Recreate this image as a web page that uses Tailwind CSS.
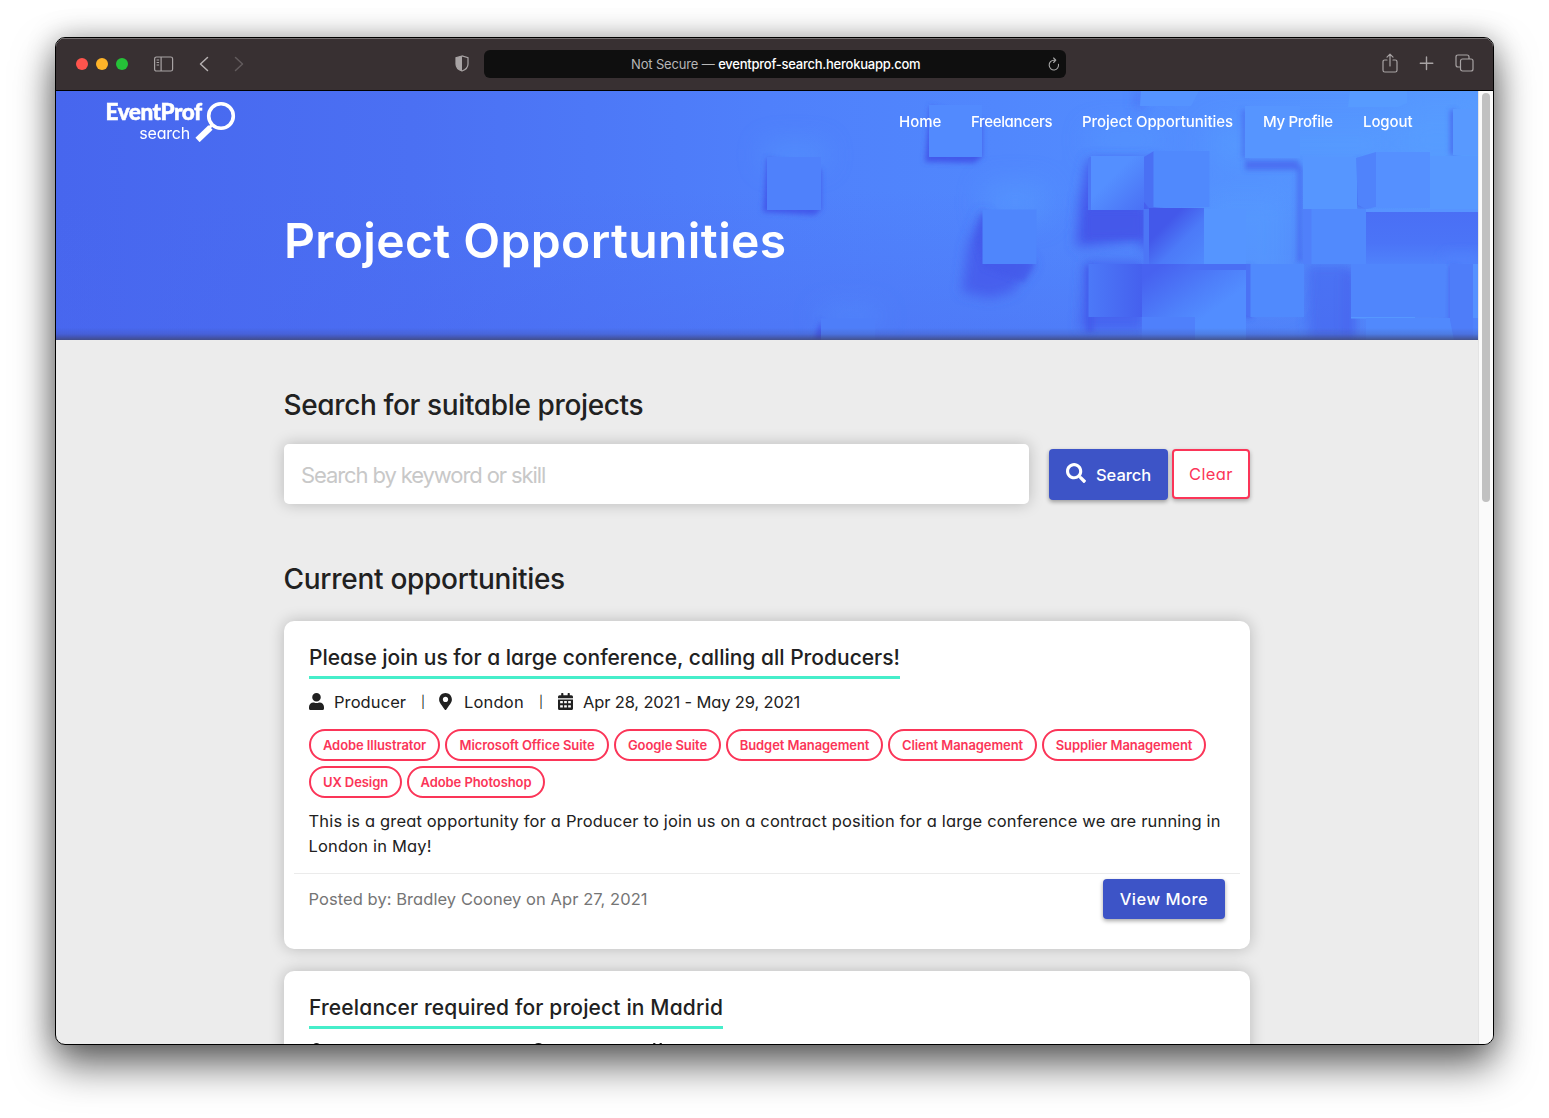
<!DOCTYPE html>
<html lang="en">
<head>
<meta charset="utf-8">
<title>EventProf Search - Project Opportunities</title>
<script src="https://cdn.jsdelivr.net/npm/@tailwindcss/browser@4"></script>
</head>
<body class="h-[1118px] overflow-hidden bg-white font-['Inter',sans-serif] text-[#212121] antialiased pt-[37px] pl-[55px]">
<div class="flex h-[1008px] w-[1439px] flex-col overflow-hidden rounded-[10px] border border-black bg-[#ececec] shadow-[0_20px_40px_rgba(0,0,0,0.6),0_0_28px_rgba(0,0,0,0.25)]">
  <!-- browser toolbar -->
  <div class="flex h-[53px] shrink-0 items-center border-t border-b border-t-[#767172] border-b-black bg-[#383032] pr-[19px] pb-[2px] pl-5 text-[#a8a3a4]">
    <div class="flex gap-2">
      <span class="size-3 rounded-full bg-[#ff544d]"></span>
      <span class="size-3 rounded-full bg-[#ffb429]"></span>
      <span class="size-3 rounded-full bg-[#25c138]"></span>
    </div>
    <svg class="ml-[26px] h-4 w-5" viewBox="0 0 20 16" fill="none" stroke="currentColor" stroke-width="1.200"><rect x="0.600" y="1" width="18" height="14" rx="1.800"/><path d="M7.100 1v14M2.600 4h2.500M2.600 6.500h2.500M2.600 9h2.500"/></svg>
    <svg class="ml-[25px] h-4 w-10 text-[#b5b0b1]" viewBox="0 0 40 16" fill="none" stroke-width="1.500" stroke-linecap="round" stroke-linejoin="round"><path stroke="currentColor" d="M8.500 1.500 1.500 8l7 6.500"/></svg>
    <svg class="-ml-[6px] h-4 w-3" viewBox="0 0 12 16" fill="none" stroke="#625b5d" stroke-width="1.500" stroke-linecap="round" stroke-linejoin="round"><path d="M2.500 1.500 9.500 8l-7 6.500"/></svg>
    <svg class="ml-[210px] h-[17px] w-[14px]" viewBox="0 0 14 17"><path d="M7 1 1 2.800v6.200c0 3.500 2.500 5.800 6 7 3.500-1.200 6-3.500 6-7V2.800z" fill="none" stroke="currentColor" stroke-width="1.200"/><path d="M7 1 1 2.800v6.200c0 3.500 2.500 5.800 6 7z" fill="currentColor"/></svg>
    <div class="ml-[15px] flex h-7 w-[582px] items-center rounded-md bg-[#0f0f0f] pr-[6px] pl-[147px] text-[13px]">
      <span class="pt-[2px] tracking-[-0.150px] whitespace-pre text-[#b7b7b7]">Not Secure — </span><span class="pt-[2px] tracking-[-0.240px] font-medium whitespace-nowrap text-white">eventprof-search.herokuapp.com</span>
      <svg class="ml-auto h-[14px] w-3" viewBox="0 0 12 14" fill="none" stroke="#a5a5a5" stroke-width="1.100" stroke-linecap="round" stroke-linejoin="round"><path d="M10.500 7.200A4.700 4.900 0 1 1 6 3.200h1.500M5.600 1l2.200 2.200-2.200 2.300"/></svg>
    </div>
    <svg class="-mt-[2px] ml-auto h-5 w-4" viewBox="0 0 16 20" fill="none" stroke="currentColor" stroke-width="1.200" stroke-linecap="round" stroke-linejoin="round"><path d="M5 7H2.800Q1 7 1 8.800v8.400Q1 19 2.800 19h10.400q1.800 0 1.800-1.800V8.800Q15 7 13.200 7H11M8 13V1.500M5 4.200 8 1.200l3 3"/></svg>
    <svg class="ml-[21px] size-[15px]" viewBox="0 0 15 15" fill="none" stroke="currentColor" stroke-width="1.400" stroke-linecap="round"><path d="M7.500 1v12.500M1.300 7.300h12.500"/></svg>
    <svg class="-mt-[1px] ml-[21px] h-[18px] w-[19px]" viewBox="0 0 19 18" fill="none" stroke="currentColor" stroke-width="1.200"><rect x="5.500" y="5" width="12.500" height="12" rx="2"/><path d="M5.500 13H3q-2 0-2-2V3q0-2 2-2h9q2 0 2 2v2"/></svg>
  </div>

  <div class="flex min-h-0 flex-1">
    <div class="flex w-[1422px] shrink-0 flex-col">
      <!-- hero -->
      <header class="relative h-[249px] shrink-0 overflow-hidden text-white">
        <svg class="absolute inset-0 h-full w-full" viewBox="56 91 1422 249" preserveAspectRatio="none">
          <defs>
            <linearGradient id="bg"><stop offset="0" stop-color="#4766ee"/><stop offset=".25" stop-color="#4b70f3"/><stop offset=".5" stop-color="#4f80fb"/><stop offset=".75" stop-color="#528bfe"/><stop offset="1" stop-color="#579aff"/></linearGradient>
            <linearGradient id="low" x2="0" y2="1"><stop offset=".4" stop-color="#4a68f0" stop-opacity="0"/><stop offset="1" stop-color="#4a68f0" stop-opacity=".4"/></linearGradient>
            <linearGradient id="edge" x2="0" y2="1"><stop offset="0" stop-color="#3c3c60" stop-opacity="0"/><stop offset=".5" stop-color="#3c3c70" stop-opacity=".18"/><stop offset="1" stop-color="#404468" stop-opacity=".75"/></linearGradient>
            <linearGradient id="f1" x1="0" y1="0" x2="1" y2="1"><stop offset=".4" stop-color="#548fff"/><stop offset="1" stop-color="#4a70f5"/></linearGradient>
            <linearGradient id="f2" x1="0" y1="0" x2="1" y2="0"><stop offset="0" stop-color="#4c79f8"/><stop offset="1" stop-color="#4560ee"/></linearGradient>
            <linearGradient id="f3" x1="0" y1="0" x2="1" y2="1"><stop offset=".3" stop-color="#4358ea"/><stop offset=".6" stop-color="#4c7af8"/><stop offset="1" stop-color="#5089fd"/></linearGradient>
            <linearGradient id="f4" x1="0" y1="0" x2="1" y2="1"><stop offset=".1" stop-color="#4762f0"/><stop offset=".45" stop-color="#4e7ffa"/><stop offset=".65" stop-color="#528dff"/></linearGradient>
            <linearGradient id="f5" x2="0" y2="1"><stop offset="0" stop-color="#4a6ff5"/><stop offset=".6" stop-color="#4b74f7"/><stop offset="1" stop-color="#4f82fb"/></linearGradient>
            <filter id="b3" x="-50%" y="-50%" width="200%" height="200%"><feGaussianBlur stdDeviation="2.500"/></filter>
            <filter id="b7" x="-50%" y="-50%" width="200%" height="200%"><feGaussianBlur stdDeviation="6"/></filter>
            <filter id="b14" x="-50%" y="-50%" width="200%" height="200%"><feGaussianBlur stdDeviation="14"/></filter>
          </defs>
          <rect x="56" y="91" width="1422" height="249" fill="url(#bg)"/>
          <rect x="56" y="91" width="1422" height="249" fill="url(#low)"/>
          <!-- light glows -->
          <g fill="#59a0ff" filter="url(#b14)" opacity=".5"><rect x="985" y="185" width="60" height="35"/><rect x="765" y="145" width="60" height="20"/><rect x="1210" y="125" width="180" height="40"/><rect x="1400" y="110" width="78" height="60"/><rect x="1200" y="190" width="90" height="110"/><rect x="820" y="310" width="60" height="12"/><rect x="1090" y="130" width="70" height="20"/></g>
          <!-- soft shadows -->
          <g fill="#4459eb" filter="url(#b7)">
            <path d="M982 212 968 245 962 292 990 298 1012 292 1034 264z" opacity=".85"/>
            <path d="M1088 160 1080 200 1076 246H1085L1142 240V160z"/>
            <path d="M1140 160h16v90h-16z" opacity=".8"/>
            <path d="M1084 262h60v68h-64z" opacity=".7"/>
            <path d="M1305 264h46v76h-42z" opacity=".5"/>
            <path d="M1346 270h8v70h-8z" opacity=".8"/>
            <path d="M1135 90h8v18h-8z" opacity=".5"/>
          </g>
          <path d="M1366 212h112v52h-112z" fill="url(#f5)"/>
          <path d="M1445 255h33v85h-33z" fill="#4f80fb" filter="url(#b7)"/>
          <g fill="#4358ea" filter="url(#b3)">
            <path d="M767 158 763 212 815 215 821 209V170z"/>
            <path d="M930 106 925 162 974 163 982 157V120z"/>
            <path d="M982 212 975 240 984 268 1024 282 1034 264z" opacity=".7"/>
            <path d="M821 320 814 340h12z"/>
            <path d="M1087 212h56v26h-56z" opacity=".8"/>
            <path d="M1245 160h54v10h-54z" opacity=".6"/>
            <path d="M1297 166h6v96h-6zM1242 110h5v48h-5z" opacity=".5"/>
            <path d="M1086 266h8v66h-8zM1244 266h8v52h-8zM1450 110h6v45h-6zM1356 160h12v48h-12zM1450 266h8v74h-8z" opacity=".65"/>
          </g>
          <!-- cubes -->
          <rect x="767" y="157" width="54" height="53" fill="#4f81fb"/>
          <rect x="929" y="105" width="53" height="52" fill="#528afe"/>
          <rect x="982.500" y="209.500" width="54" height="54.500" fill="#4f86fc"/>
          <rect x="821" y="318.500" width="54" height="22" fill="#4e7ef9"/>
          <rect x="1090" y="156" width="54" height="54" fill="url(#f1)"/>
          <path d="M1088 159l3-3v54l-3 0z" fill="#4c77f6"/>
          <rect x="1143.500" y="209" width="6" height="55" fill="#4c76f6"/>
          <rect x="1149" y="208" width="55" height="56" fill="url(#f3)"/>
          <rect x="1204" y="209" width="42" height="55" fill="#5595ff"/>
          <path d="M1144 157 1154 151V207L1149 208 1144 202z" fill="#4a70f4"/>
          <rect x="1153.500" y="151" width="56" height="56" fill="#5089fd"/>
          <path d="M1141 91h58l-8 15h-51z" fill="#5593ff"/>
          <path d="M1245 106h55v52h-55z" fill="#5695ff"/>
          <path d="M1350 91h57v12l-9 4h-50z" fill="#579bff"/>
          <path d="M1453 109h25v46h-25z" fill="#5899ff"/>
          <path d="M1303 157h54v52h-54z" fill="#5696ff"/>
          <path d="M1303 209h9v55h-9z" fill="#5080fa"/>
          <rect x="1311.500" y="209" width="54.500" height="55" fill="#518afd"/>
          <path d="M1430 156h48v55h-48z" fill="#5798ff"/>
          <path d="M1356 158 1376 152V207L1366 209 1358 205z" fill="#5083fb"/>
          <rect x="1376" y="152" width="54" height="56" fill="#5590ff"/>
          <path d="M1366 209h112v3h-112z" fill="#5794ff"/>
          <rect x="1088.500" y="264" width="54" height="53" fill="url(#f2)"/>
          <path d="M1142 264h104v76h-104z" fill="url(#f4)"/>
          <path d="M1190 264h56v6h-56z" fill="#4a6ff4"/>
          <path d="M1142 317h53v23h-53z" fill="#4f80fb"/>
          <path d="M1246 264h5v54l-5-3z" fill="#4b72f5"/>
          <rect x="1250.500" y="264" width="53.500" height="53" fill="#508afd"/>
          <path d="M1351 264h94v53h-94z" fill="#5086fc"/>
          <path d="M1351 317h64v1.500h-64z" fill="#5698ff"/>
          <path d="M1366 318h88v22h-88z" fill="#5189fd"/>
          <path d="M1450 264h23v76h-19l-4-20z" fill="#4e7df9"/>
          <path d="M1473 264h5v54h-5z" fill="#5591ff"/>
          <rect x="56" y="328" width="1422" height="12" fill="url(#edge)"/>
        </svg>
        <nav class="relative flex h-[60px] items-start pr-[65px] pl-[50px] font-medium text-[15px]">
          <!-- logo -->
          <div class="flex pt-[9px]">
            <div class="flex w-[97px] flex-col">
              <span class="-ml-[0.500px] font-['Lato',sans-serif] text-[22.500px] leading-6 font-black tracking-[-0.450px] [-webkit-text-stroke:0.500px_#fff]">EventProf</span>
              <span class="mt-[3px] pr-[13px] text-right text-[16px] leading-[13px] font-normal tracking-[-0.200px] [font-feature-settings:'cv11']">search</span>
            </div>
            <svg class="-ml-[9px] h-[42px] w-[42px]" viewBox="0 0 42 42" fill="none" stroke="#fff"><circle cx="27" cy="16" r="12.300" stroke-width="3.600"/><path d="M19 24 15.500 27.500" stroke-width="3"/><path d="M16.500 27.500 3.500 40" stroke-width="6"/></svg>
          </div>
          <div class="ml-auto flex gap-[30px] pt-[19px] leading-6 whitespace-nowrap [font-feature-settings:'cv11']">
            <a class="w-[42px]">Home</a>
            <a class="w-[81px] tracking-[-0.350px]">Freelancers</a>
            <a class="w-[151px] tracking-[-0.070px]">Project Opportunities</a>
            <a class="w-[70px] tracking-[-0.300px]">My Profile</a>
            <a class="w-[50px] tracking-[-0.100px]">Logout</a>
          </div>
        </nav>
        <h1 class="relative pt-[60px] pl-[228px] text-[48px] leading-[60px] font-semibold tracking-[0.380px] whitespace-nowrap [font-feature-settings:'cv11']">Project Opportunities</h1>
      </header>

      <main class="flex flex-col pr-[228px] pl-[228px] text-[16.500px] whitespace-nowrap [font-feature-settings:'cv11']">
        <h2 class="-ml-[0.500px] mt-[47px] text-[28px] leading-9 font-medium tracking-[-0.370px]">Search for suitable projects</h2>
        <div class="mt-[21px] flex h-[60px] w-[966px] items-center">
          <div class="mr-5 flex h-[60px] w-[745px] items-center rounded-[5px] bg-white pt-[2px] pl-[17px] text-[22px] font-normal tracking-[-1.100px] text-[#c8c8c8] shadow-[0_0_15px_rgba(0,0,0,0.22)] [font-feature-settings:normal]">Search by keyword or skill</div>
          <button class="mr-1 flex h-[51px] w-[119px] items-center rounded bg-[#3d54c7] pl-[17px] font-medium tracking-[-0.050px] text-white shadow-[0_2px_4px_rgba(0,0,0,0.35)] [font-feature-settings:normal]">
            <svg class="-mt-[3px] mr-[10px] size-5" viewBox="0 0 512 512" fill="currentColor"><path d="M505 442.700 405.300 343c-4.500-4.500-10.600-7-17-7H372c27.600-35.300 44-79.700 44-128C416 93.100 322.900 0 208 0S0 93.100 0 208s93.100 208 208 208c48.300 0 92.700-16.400 128-44v16.300c0 6.400 2.500 12.500 7 17l99.700 99.700c9.400 9.400 24.600 9.400 33.900 0l28.300-28.300c9.400-9.400 9.400-24.600.1-34zM208 336c-70.700 0-128-57.200-128-128 0-70.700 57.200-128 128-128 70.700 0 128 57.200 128 128 0 70.700-57.200 128-128 128z"/></svg><span class="pt-[2px]">Search</span></button>
          <button class="-mt-[1px] flex h-[50px] w-[78px] items-center justify-center rounded border-2 border-[#fb3558] bg-white pt-[2px] tracking-[0.400px] text-[#fb3558] shadow-[0_2px_4px_rgba(0,0,0,0.3)]">Clear</button>
        </div>
        <h2 class="-ml-[0.500px] mt-[57px] text-[28px] leading-9 font-medium tracking-[-0.280px]">Current opportunities</h2>

        <!-- opportunity card -->
        <article class="mt-[24px] flex h-[328px] w-[966px] shrink-0 flex-col rounded-[10px] bg-white px-[25px] pt-[21px] shadow-[0_0_15px_rgba(0,0,0,0.22)]">
          <h3 class="h-[37px] w-[591px] border-b-[3px] border-[#46eeca] text-[21px] leading-8 font-medium">Please join us for a large conference, calling all Producers!</h3>
          <div class="mt-[10px] flex h-6 items-center *:[span]:pt-[2px]">
            <svg class="mr-[10px] h-[17px] w-[15px]" viewBox="0 0 448 512" preserveAspectRatio="none" fill="currentColor"><path d="M224 256c70.700 0 128-57.300 128-128S294.700 0 224 0 96 57.300 96 128s57.300 128 128 128zm89.600 32h-16.700c-22.200 10.200-46.900 16-72.900 16s-50.600-5.800-72.900-16h-16.700C60.200 288 0 348.200 0 422.400V464c0 26.500 21.500 48 48 48h352c26.500 0 48-21.500 48-48v-41.600c0-74.200-60.200-134.400-134.400-134.400z"/></svg>
            <span class="w-[87px] tracking-[0.080px]">Producer</span><span class="w-[18px] text-[12px]">|</span>
            <svg class="mr-[12px] h-[17px] w-[13px]" viewBox="0 0 384 512" fill="currentColor"><path d="M172.300 501.700C27 291 0 269.400 0 192 0 86 86 0 192 0s192 86 192 192c0 77.400-27 99-172.300 309.700-9.500 13.800-29.900 13.800-39.400 0zM192 272c44.200 0 80-35.800 80-80s-35.800-80-80-80-80 35.800-80 80 35.800 80 80 80z"/></svg>
            <span class="w-[75px] tracking-[0.200px]">London</span><span class="w-[19px] text-[12px]">|</span>
            <svg class="mr-[10px] h-[17px] w-[15px]" viewBox="0 0 448 512" preserveAspectRatio="none" fill="currentColor"><path fill-rule="evenodd" d="M0 464c0 26.500 21.500 48 48 48h352c26.500 0 48-21.500 48-48V192H0zM64 240h80v72H64zM184 240h80v72h-80zM304 240h80v72h-80zM64 368h80v72H64zM184 368h80v72h-80zM304 368h80v72h-80zM400 64h-48V12q0-12-12-12h-40q-12 0-12 12v52H160V12q0-12-12-12h-40q-12 0-12 12v52H48Q0 64 0 112v48h448v-48q0-48-48-48z"/></svg>
            <span class="tracking-[-0.150px]">Apr 28, 2021 - May 29, 2021</span>
          </div>
          <div class="mt-4 flex flex-wrap gap-[5px] text-[13px] font-semibold tracking-[-0.080px] text-[#fb3558] [font-feature-settings:normal] *:flex *:h-8 *:items-center *:justify-center *:rounded-full *:border-2 *:border-[#fb3558] *:pt-[2px]">
            <span class="w-[131px]">Adobe Illustrator</span><span class="w-[164px]">Microsoft Office Suite</span><span class="w-[107px]">Google Suite</span><span class="w-[157px]">Budget Management</span><span class="w-[149px]">Client Management</span><span class="w-[164px]">Supplier Management</span><span class="w-[93px]">UX Design</span><span class="w-[138px]">Adobe Photoshop</span>
          </div>
          <p class="-ml-[0.500px] mt-[11px] leading-[25px] tracking-[0.165px]">This is a great opportunity for a Producer to join us on a contract position for a large conference we are running in<br>London in May!</p>
          <div class="-mx-[15px] mt-[14px] flex justify-between border-t border-[#ebebeb] px-[15px] pt-[5px]">
            <span class="-ml-[0.500px] leading-10 tracking-[0.060px] text-[#757575]">Posted by: Bradley Cooney on Apr 27, 2021</span>
            <button class="h-10 w-[122px] rounded bg-[#3d54c7] font-medium tracking-[0.500px] text-white shadow-[0_2px_4px_rgba(0,0,0,0.35)]">View More</button>
          </div>
        </article>
        <article class="mt-[22px] flex h-[328px] w-[966px] shrink-0 flex-col rounded-[10px] bg-white px-[25px] pt-[21px] shadow-[0_0_15px_rgba(0,0,0,0.22)]">
          <h3 class="h-[37px] w-[414px] border-b-[3px] border-[#46eeca] text-[21px] leading-8 font-medium tracking-[0.150px]">Freelancer required for project in Madrid</h3>
          <div class="mt-[14px] flex h-6 items-start">
            <svg class="mr-[208px] h-[17px] w-[15px]" viewBox="0 0 448 512" preserveAspectRatio="none" fill="currentColor"><circle cx="224" cy="128" r="128"/></svg>
            <svg class="mr-[105px] h-[17px] w-[13px]" viewBox="0 0 384 512" fill="currentColor"><circle cx="192" cy="192" r="192"/></svg>
            <svg class="h-[17px] w-[15px]" viewBox="0 0 448 512" preserveAspectRatio="none" fill="currentColor"><path d="M96 0h64v64H96zM288 0h64v64h-64zM0 64h448v448H0z"/></svg>
          </div>
        </article>
      </main>
    </div>
    <!-- scrollbar -->
    <div class="flex flex-1 justify-center border-l border-[#e4e4e4] bg-[#fafafa] pt-[2px]"><div class="h-[409px] w-2 rounded-full bg-[#c1c1c1]"></div></div>
  </div>
</div>
</body>
</html>
